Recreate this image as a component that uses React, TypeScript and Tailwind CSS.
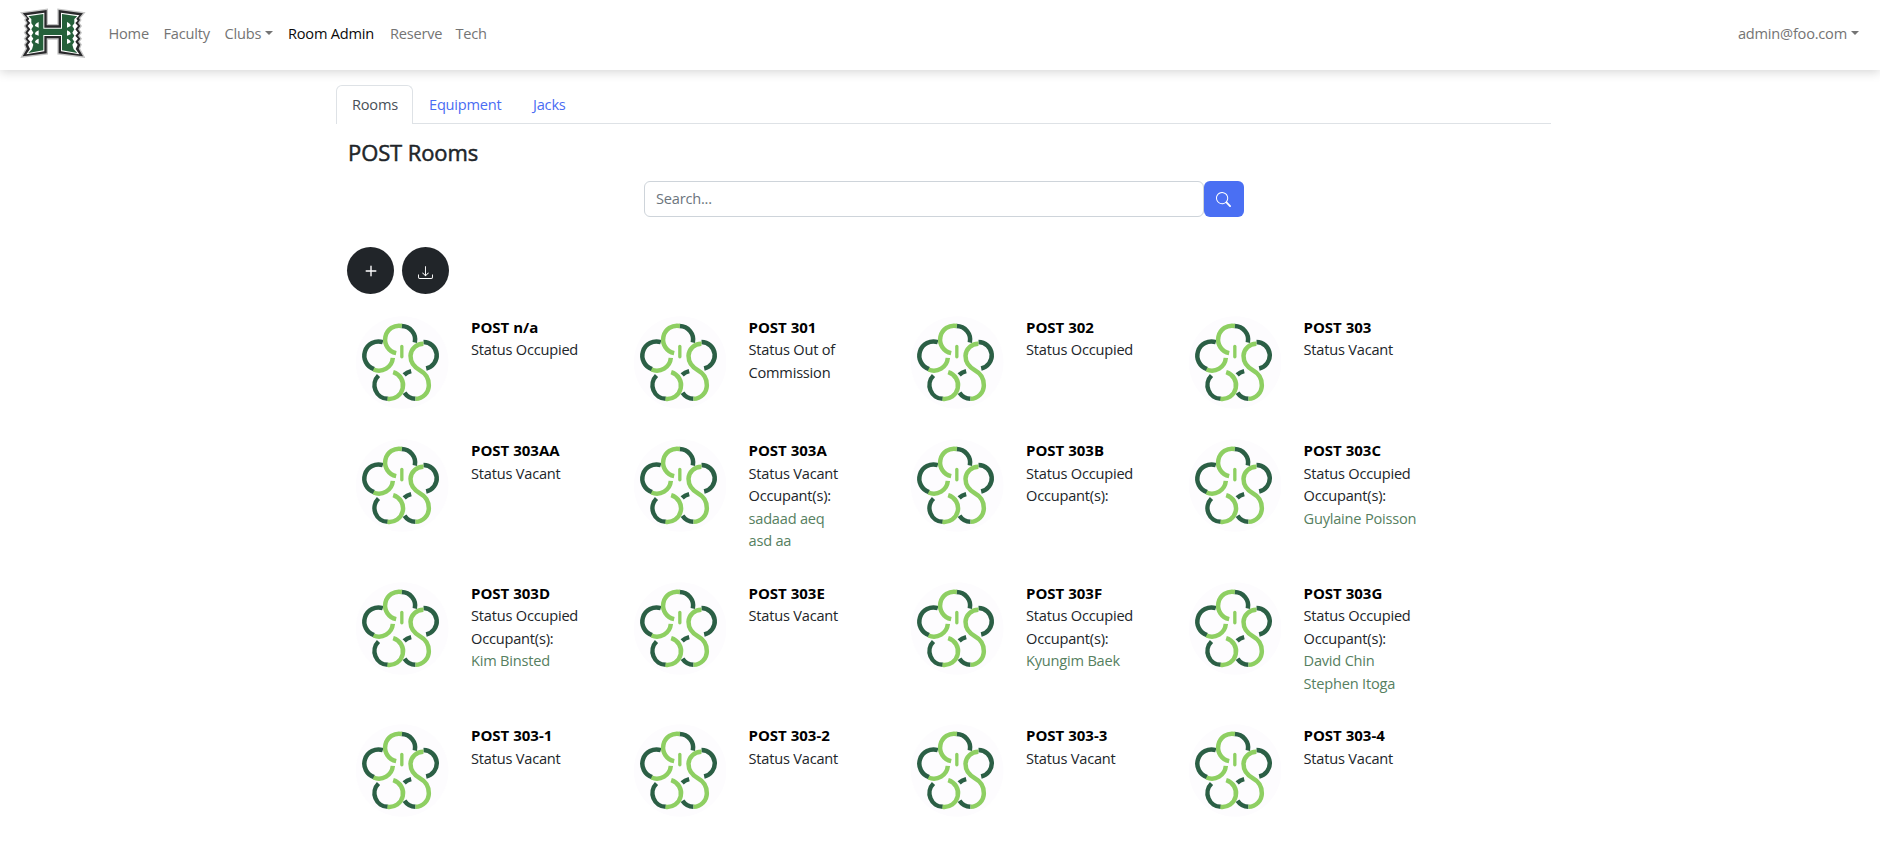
import { BsDownload, BsPlus, BsSearch } from "react-icons/bs";

type Room = { name: string; status: string; occupants?: string[] };

const rooms: Room[] = [
  { name: "n/a", status: "Occupied" },
  { name: "301", status: "Out of Commission" },
  { name: "302", status: "Occupied" },
  { name: "303", status: "Vacant" },
  { name: "303AA", status: "Vacant" },
  { name: "303A", status: "Vacant", occupants: ["sadaad aeq", "asd aa"] },
  { name: "303B", status: "Occupied", occupants: [] },
  { name: "303C", status: "Occupied", occupants: ["Guylaine Poisson"] },
  { name: "303D", status: "Occupied", occupants: ["Kim Binsted"] },
  { name: "303E", status: "Vacant" },
  { name: "303F", status: "Occupied", occupants: ["Kyungim Baek"] },
  { name: "303G", status: "Occupied", occupants: ["David Chin", "Stephen Itoga"] },
  { name: "303-1", status: "Vacant" },
  { name: "303-2", status: "Vacant" },
  { name: "303-3", status: "Vacant" },
  { name: "303-4", status: "Vacant" },
];

function HawaiiLogo() {
  const shape =
    "M68 40 L140 30 V76 H176 V30 L249 40 L237 54 L240 60 L234 69 L241 78 L234 88 L241 98 L234 107 L241 116 L234 125 L241 134 L236 146 L249 169 L176 160 V115 H140 V160 L68 169 L81 146 L76 134 L83 125 L76 116 L83 107 L76 98 L83 88 L76 78 L83 69 L77 60 L81 54 Z";
  return (
    <svg viewBox="54 18 210 162" className="h-[54px] w-[70px]" aria-label="H logo">
      <path d={shape} fill="#c4c4c4" stroke="#c4c4c4" strokeWidth="8" />
      <path d={shape} fill="#29292b" />
      <path
        d="M79 46 L133 38 V83 H183 V38 L238 46 L229 56 L233 62 L226 69 L234 78 L226 88 L234 98 L226 107 L234 116 L226 125 L233 134 L227 147 L238 163 L183 154 V108 H133 V154 L79 163 L90 147 L84 134 L91 125 L83 116 L91 107 L83 98 L91 88 L83 78 L91 69 L84 62 L88 56 Z"
        fill="#fff"
      />
      <path
        d="M85 49 L130 42 V86 H186 V42 L232 49 L223 57 L223 70 L217 78 L223 88 L217 98 L223 107 L217 116 L223 125 L217 134 L221 148 L232 159 L186 151 V105 H130 V151 L85 159 L96 148 L100 134 L94 125 L100 116 L94 107 L100 98 L94 88 L100 78 L94 70 L94 57 Z"
        fill="#25603a"
      />
      <g fill="#fff">
        <path d="M116 66 Q104 72 105 78 L116 83 Z M116 91 Q104 96 105 103 L116 107 Z M116 116 Q104 121 105 127 L116 132 Z" />
        <path d="M201 66 Q213 72 212 78 L201 83 Z M201 91 Q213 96 212 103 L201 107 Z M201 116 Q213 121 212 127 L201 132 Z" />
      </g>
    </svg>
  );
}

function Flower() {
  return (
    <svg viewBox="13.5 18.5 280.5 280.5" className="size-[93.5px] shrink-0">
      <circle cx="155" cy="158" r="139" fill="#fdfcfe" />
      <g fill="none" strokeWidth="13.5">
        <g stroke="#2b5f45">
          <path d="M153 48.5 A41 41 0 0 1 193 98" />
          <path d="M97 97 A42.2 42.2 0 0 0 71 178" />
          <path d="M219 96.5 A40.2 40.2 0 0 1 227 176" />
          <path d="M84 197 A41 41 0 0 0 112 267" />
          <path d="M195 267 A41 41 0 0 1 162 249" />
          <path d="M161 195 Q169 187 182 184" />
        </g>
        <g stroke="#8ecf62">
          <path d="M154 48.5 A41 41 0 0 0 137 130" />
          <path d="M69 179 A42 42 0 0 0 127 144" />
          <path d="M219 102 A38 38 0 0 0 180 138 C180 161 193 173 208 181 C225 190 235 204 235 226 A41 41 0 0 1 195 267" />
          <path d="M128 187 A41 41 0 0 1 111 267" />
        </g>
      </g>
      <path d="M154 110 V141" stroke="#8ecf62" strokeWidth="10" strokeLinecap="round" />
    </svg>
  );
}

function Caret() {
  return <span className="mb-[5px] ml-[4px] inline-block border-x-[4.5px] border-t-[4.5px] border-x-transparent border-t-current align-middle" />;
}

export default function App() {
  return (
    <div className="min-h-screen bg-white font-['Open_Sans','Noto_Sans',sans-serif] text-[14.6px] leading-[22.5px] tracking-[-0.21px] text-[#212529]">
      <nav className="flex h-[70px] items-start justify-between bg-white pr-[21px] pl-[17.5px] text-[#747474] shadow-[0_2px_10px_rgba(0,0,0,0.17)]">
        <div className="flex">
          <div className="pt-[6px]">
            <HawaiiLogo />
          </div>
          <div className="ml-[21px] flex pt-[22px] whitespace-nowrap">
            <a className="w-[55px]">Home</a>
            <a className="w-[61px]">Faculty</a>
            <a className="w-[63.5px]">
              Clubs
              <Caret />
            </a>
            <a className="w-[102px] text-[#0a0a0a]">Room Admin</a>
            <a className="w-[65.5px]">Reserve</a>
            <a>Tech</a>
          </div>
        </div>
        <a className="pt-[22px]">
          admin@foo.com
          <Caret />
        </a>
      </nav>

      <main className="ml-[336px] w-[1215px] pt-[15px]">
        <div className="flex h-[39px] border-b border-[#dee2e6]">
          <a className="h-[39px] w-[77px] rounded-t-[6px] border border-b-0 border-[#dee2e6] bg-white pt-[7px] pl-[15px] text-[#495057]">Rooms</a>
          <a className="w-[103px] pt-[8px] pl-[16px] text-[#4a6cf3]">Equipment</a>
          <a className="pt-[8px] pl-[17px] text-[#4a6cf3]">Jacks</a>
        </div>

        <section className="pl-[11px]">
          <h1 className="mt-[15px] pl-px text-[22px] leading-[27px] font-medium tracking-[-0.1px] [-webkit-text-stroke:0.5px_#212529]">POST Rooms</h1>

          <div className="mt-[15px] ml-[297px] flex h-[36px]">
            <div className="w-[560px] rounded-[6px] border border-[#ced4da] pt-[5px] pl-[11px] text-[#6c757d]">Search...</div>
            <button className="flex w-[40px] items-center justify-center rounded-[6px] bg-[#4a6ff3] pr-[2px] text-white">
              <BsSearch size={15} />
            </button>
          </div>

          <div className="mt-[30px] flex gap-2">
            <button className="flex size-[47px] items-center justify-center rounded-full bg-[#212529] pt-px pl-px text-white">
              <BsPlus size={22} />
            </button>
            <button className="flex size-[47px] items-center justify-center rounded-full bg-[#212529] pt-[3px] text-white">
              <BsDownload size={15} />
            </button>
          </div>

          <div className="mt-[6.5px] grid w-[1110px] grid-cols-4">
            {rooms.map((room) => (
              <article key={room.name} className="flex py-[15px] pl-[8px]">
                <Flower />
                <div className="ml-[22.5px] w-[120px]">
                  <h2 className="text-[15px] font-bold tracking-normal text-black">POST {room.name}</h2>
                  <p>Status {room.status}</p>
                  {room.occupants && <p>Occupant(s):</p>}
                  {room.occupants?.map((person) => (
                    <p key={person} className="text-[#56805f]">
                      {person}
                    </p>
                  ))}
                </div>
              </article>
            ))}
          </div>
        </section>
      </main>
    </div>
  );
}
